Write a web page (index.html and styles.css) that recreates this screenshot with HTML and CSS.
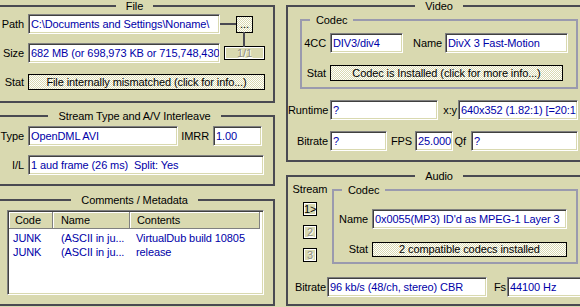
FILE: index.html
```html
<!DOCTYPE html>
<html lang="en">
<head>
  <meta charset="UTF-8">
  <title>AVI Info</title>
  <link rel="stylesheet" href="styles.css">
</head>
<body>
  <div class="dialog">
    <div class="col col-left">
      <fieldset class="group file">
        <legend>File</legend>
        <div class="row r-path">
          <span class="lbl lbl-l">Path</span>
          <div class="edit e-path">C:\Documents and Settings\Noname\</div>
          <span class="hline"></span>
          <span class="browse">...</span>
        </div>
        <div class="row r-size">
          <span class="lbl lbl-l">Size</span>
          <div class="edit e-path">682 MB (or 698,973 KB or 715,748,430</div>
          <span class="part">1/1</span>
        </div>
        <div class="row r-stat">
          <span class="lbl lbl-l">Stat</span>
          <div class="stat s-file">File internally mismatched (click for info...)</div>
        </div>
      </fieldset>

      <fieldset class="group stream">
        <legend>Stream Type and A/V Interleave</legend>
        <div class="row r-type">
          <span class="lbl lbl-l">Type</span>
          <div class="edit e-type">OpenDML AVI</div>
          <span class="lbl lbl-imrr">IMRR</span>
          <div class="edit e-imrr">1.00</div>
        </div>
        <div class="row r-il">
          <span class="lbl lbl-l">I/L</span>
          <div class="edit e-il">1 aud frame (26 ms)&nbsp; Split: Yes</div>
        </div>
      </fieldset>

      <fieldset class="group comments">
        <legend>Comments / Metadata</legend>
        <div class="list">
          <div class="list-head">
            <span class="c-code">Code</span>
            <span class="c-name">Name</span>
            <span class="c-text">Contents</span>
          </div>
          <div class="list-row first">
            <span class="c-code">JUNK</span>
            <span class="c-name">(ASCII in ju...</span>
            <span class="c-text">VirtualDub build 10805</span>
          </div>
          <div class="list-row">
            <span class="c-code">JUNK</span>
            <span class="c-name">(ASCII in ju...</span>
            <span class="c-text">release</span>
          </div>
        </div>
      </fieldset>
    </div>

    <div class="col col-right">
      <fieldset class="group video">
        <legend>Video</legend>
        <fieldset class="codec codec-v">
          <legend>Codec</legend>
          <div class="row r-4cc">
            <span class="lbl lbl-cv">4CC</span>
            <div class="edit e-4cc">DIV3/div4</div>
            <span class="lbl lbl-vname">Name</span>
            <div class="edit e-vname">DivX 3 Fast-Motion</div>
          </div>
          <div class="row r-vstat">
            <span class="lbl lbl-cv">Stat</span>
            <div class="stat s-video">Codec is Installed (click for more info...)</div>
          </div>
        </fieldset>
        <div class="row r-runtime">
          <span class="lbl lbl-v">Runtime</span>
          <div class="edit e-runtime">?</div>
          <span class="lbl lbl-xy">x:y</span>
          <div class="edit e-xy">640x352 (1.82:1) [=20:1</div>
        </div>
        <div class="row r-vbit">
          <span class="lbl lbl-v">Bitrate</span>
          <div class="edit e-vbit">?</div>
          <span class="lbl lbl-fps">FPS</span>
          <div class="edit e-fps">25.000</div>
          <span class="lbl lbl-qf">Qf</span>
          <div class="edit e-qf">?</div>
        </div>
      </fieldset>

      <fieldset class="group audio">
        <legend>Audio</legend>
        <div class="audio-top">
          <div class="stream-col">
            <span class="stream-lbl">Stream</span>
            <span class="sbtn on">1&gt;</span>
            <span class="sbtn">2</span>
            <span class="sbtn">3</span>
          </div>
          <fieldset class="codec codec-a">
            <legend>Codec</legend>
            <div class="row r-aname">
              <span class="lbl lbl-ca">Name</span>
              <div class="edit e-aname">0x0055(MP3) ID'd as MPEG-1 Layer 3</div>
            </div>
            <div class="row r-astat">
              <span class="lbl lbl-ca">Stat</span>
              <div class="stat s-audio">2 compatible codecs installed</div>
            </div>
          </fieldset>
        </div>
        <div class="row r-abit">
          <span class="lbl lbl-ab">Bitrate</span>
          <div class="edit e-abit">96 kb/s (48/ch, stereo) CBR</div>
          <span class="lbl lbl-fs">Fs</span>
          <div class="edit e-fs">44100 Hz</div>
        </div>
      </fieldset>
    </div>
  </div>
</body>
</html>
```

FILE: styles.css
```css
* {
  box-sizing: border-box;
}
body {
  margin: 0;
  width: 580px;
  height: 307px;
  overflow: hidden;
  background: #d9d9b0;
  color: #000;
  font: 11px/13px "Liberation Sans", Arial, sans-serif;
  letter-spacing: -0.1px;
}
.dialog {
  display: flex;
  align-items: flex-start;
}
.col {
  display: flex;
  flex-direction: column;
  flex: none;
}
.col-left {
  width: 281px;
  margin-left: -6px;
}
.col-right {
  width: 306px;
  margin-left: 11px;
}

/* group boxes */
fieldset {
  margin: 0;
  padding: 0;
  min-width: 0;
}
.group {
  border: 2px solid #4a4a52;
}
.group > legend {
  margin: 0 auto;
  padding: 0 10px;
  line-height: 12px;
}
.codec {
  border: 2px solid #9a9aae;
}
.codec > legend {
  margin-left: 8px;
  padding: 0 6px;
  line-height: 12px;
}
.file { height: 103px; }
.stream { height: 76px; margin-top: 7px; }
.comments { height: 112px; margin-top: 8px; }
.video { height: 162px; }
.audio { height: 136px; margin-top: 8px; }

/* rows and controls */
.row {
  display: flex;
  align-items: center;
  height: 20px;
}
.lbl {
  flex: none;
  text-align: right;
  white-space: nowrap;
}
.edit {
  flex: none;
  height: 20px;
  padding-left: 2px;
  background: #fff;
  color: #0000a8;
  line-height: 18px;
  white-space: nowrap;
  overflow: hidden;
  border: 1px solid;
  border-color: #808080 #fff #fff #808080;
  box-shadow: inset 1px 1px #404040, inset -1px -1px #d9d9b0;
}
.stat {
  flex: none;
  height: 16px;
  border: 1px solid #000;
  background: repeating-conic-gradient(#fff 0 25%, #d9d9b0 0 50%) 0 0 / 2px 2px;
  text-align: center;
  line-height: 14px;
  white-space: nowrap;
  overflow: hidden;
}

/* File */
.lbl-l { width: 32px; padding-right: 4px; }
.r-path { margin-top: 2px; }
.r-size, .r-stat { margin-top: 9px; }
.e-path { width: 192px; }
.hline {
  width: 16px;
  height: 2px;
  background: #4a4a52;
}
.browse {
  position: relative;
  width: 17px;
  height: 17px;
  border: 1px solid #000;
  background: repeating-conic-gradient(#fff 0 25%, #d9d9b0 0 50%) 0 0 / 2px 2px;
  text-align: center;
  line-height: 15px;
}
.browse::after {
  content: "";
  position: absolute;
  left: 6px;
  top: 100%;
  width: 2px;
  height: 15px;
  background: #4a4a52;
}
.part {
  width: 41px;
  height: 14px;
  margin-left: 4px;
  border: 1px solid #000;
  box-shadow: inset 1px 1px #fff, inset -1px -1px #fff;
  color: #8e8e86;
  text-shadow: 1px 1px #fff;
  text-align: center;
  line-height: 12px;
}
.s-file { width: 237px; }

/* Stream type */
.r-type { margin-top: 4px; }
.r-il { margin-top: 9px; }
.e-type { width: 150px; }
.lbl-imrr { width: 35px; padding-right: 4px; }
.e-imrr { width: 49px; }
.e-il { width: 236px; }

/* Comments list */
.list {
  margin: 4px 0 0 11px;
  width: 257px;
  height: 85px;
  padding: 1px;
  background: #fff;
  border: 1px solid;
  border-color: #808080 #fff #fff #808080;
  box-shadow: inset 1px 1px #404040, inset -1px -1px #d9d9b0;
}
.list-head, .list-row {
  display: flex;
  white-space: nowrap;
}
.list-head {
  height: 17px;
}
.list-head span {
  background: #d9d9b0;
  border-right: 1px solid #808080;
  border-bottom: 1px solid #808080;
  box-shadow: inset 1px 1px #fff;
  line-height: 16px;
}
.c-code { width: 44px; }
.c-name { width: 77px; }
.c-text { width: 130px; }
.list-head .c-code { padding-left: 6px; }
.list-head .c-name { padding-left: 8px; }
.list-head .c-text { padding-left: 7px; }
.list-row {
  height: 14px;
  line-height: 14px;
  color: #0000a8;
}
.list-row.first { margin-top: 2px; }
.list-row .c-code { padding-left: 4px; }
.list-row .c-name { padding-left: 8px; overflow: hidden; }
.list-row .c-text { padding-left: 6px; }

/* Video */
.codec-v {
  width: 278px;
  height: 75px;
  margin: 2px 0 0 12px;
}
.lbl-cv { width: 28px; padding-right: 4px; }
.r-4cc { margin-top: 7px; }
.r-vstat { margin-top: 10px; }
.e-4cc { width: 73px; }
.lbl-vname { width: 42px; padding-right: 3px; }
.e-vname { width: 123px; }
.s-video { width: 233px; }
.r-runtime { margin-top: 11px; }
.r-vbit { margin-top: 11px; }
.lbl-v { width: 42px; padding-right: 2px; }
.e-runtime { width: 108px; }
.lbl-xy { width: 20px; padding-right: 1px; }
.e-xy { width: 120px; }
.e-vbit { width: 57px; }
.lbl-fps { width: 28px; padding-right: 3px; }
.e-fps { width: 38px; }
.lbl-qf { width: 18px; padding-right: 5px; }
.e-qf { width: 107px; }

/* Audio */
.audio-top {
  display: flex;
  align-items: flex-start;
}
.stream-col {
  width: 44px;
  display: flex;
  flex-direction: column;
  align-items: center;
}
.stream-lbl {
  margin-top: 1px;
  line-height: 13px;
}
.sbtn {
  width: 14px;
  height: 14px;
  margin-top: 9px;
  border: 1px solid #000;
  box-shadow: inset 1px 1px #fff, inset -1px -1px #fff;
  color: #8e8e86;
  text-shadow: 1px 1px #fff;
  text-align: center;
  line-height: 12px;
}
.sbtn.on {
  margin-top: 6px;
  color: #000;
  text-shadow: none;
}
.codec-a {
  width: 246px;
  height: 80px;
  margin-top: 2px;
}
.lbl-ca { width: 38px; padding-right: 4px; }
.r-aname { margin-top: 13px; }
.r-astat { margin-top: 10px; }
.e-aname { width: 195px; }
.s-audio { width: 195px; height: 15px; line-height: 13px; }
.r-abit { margin-top: 13px; }
.lbl-ab { width: 39px; padding-right: 1px; }
.e-abit { width: 160px; }
.lbl-fs { width: 20px; padding-right: 1px; }
.e-fs { width: 90px; }
```
